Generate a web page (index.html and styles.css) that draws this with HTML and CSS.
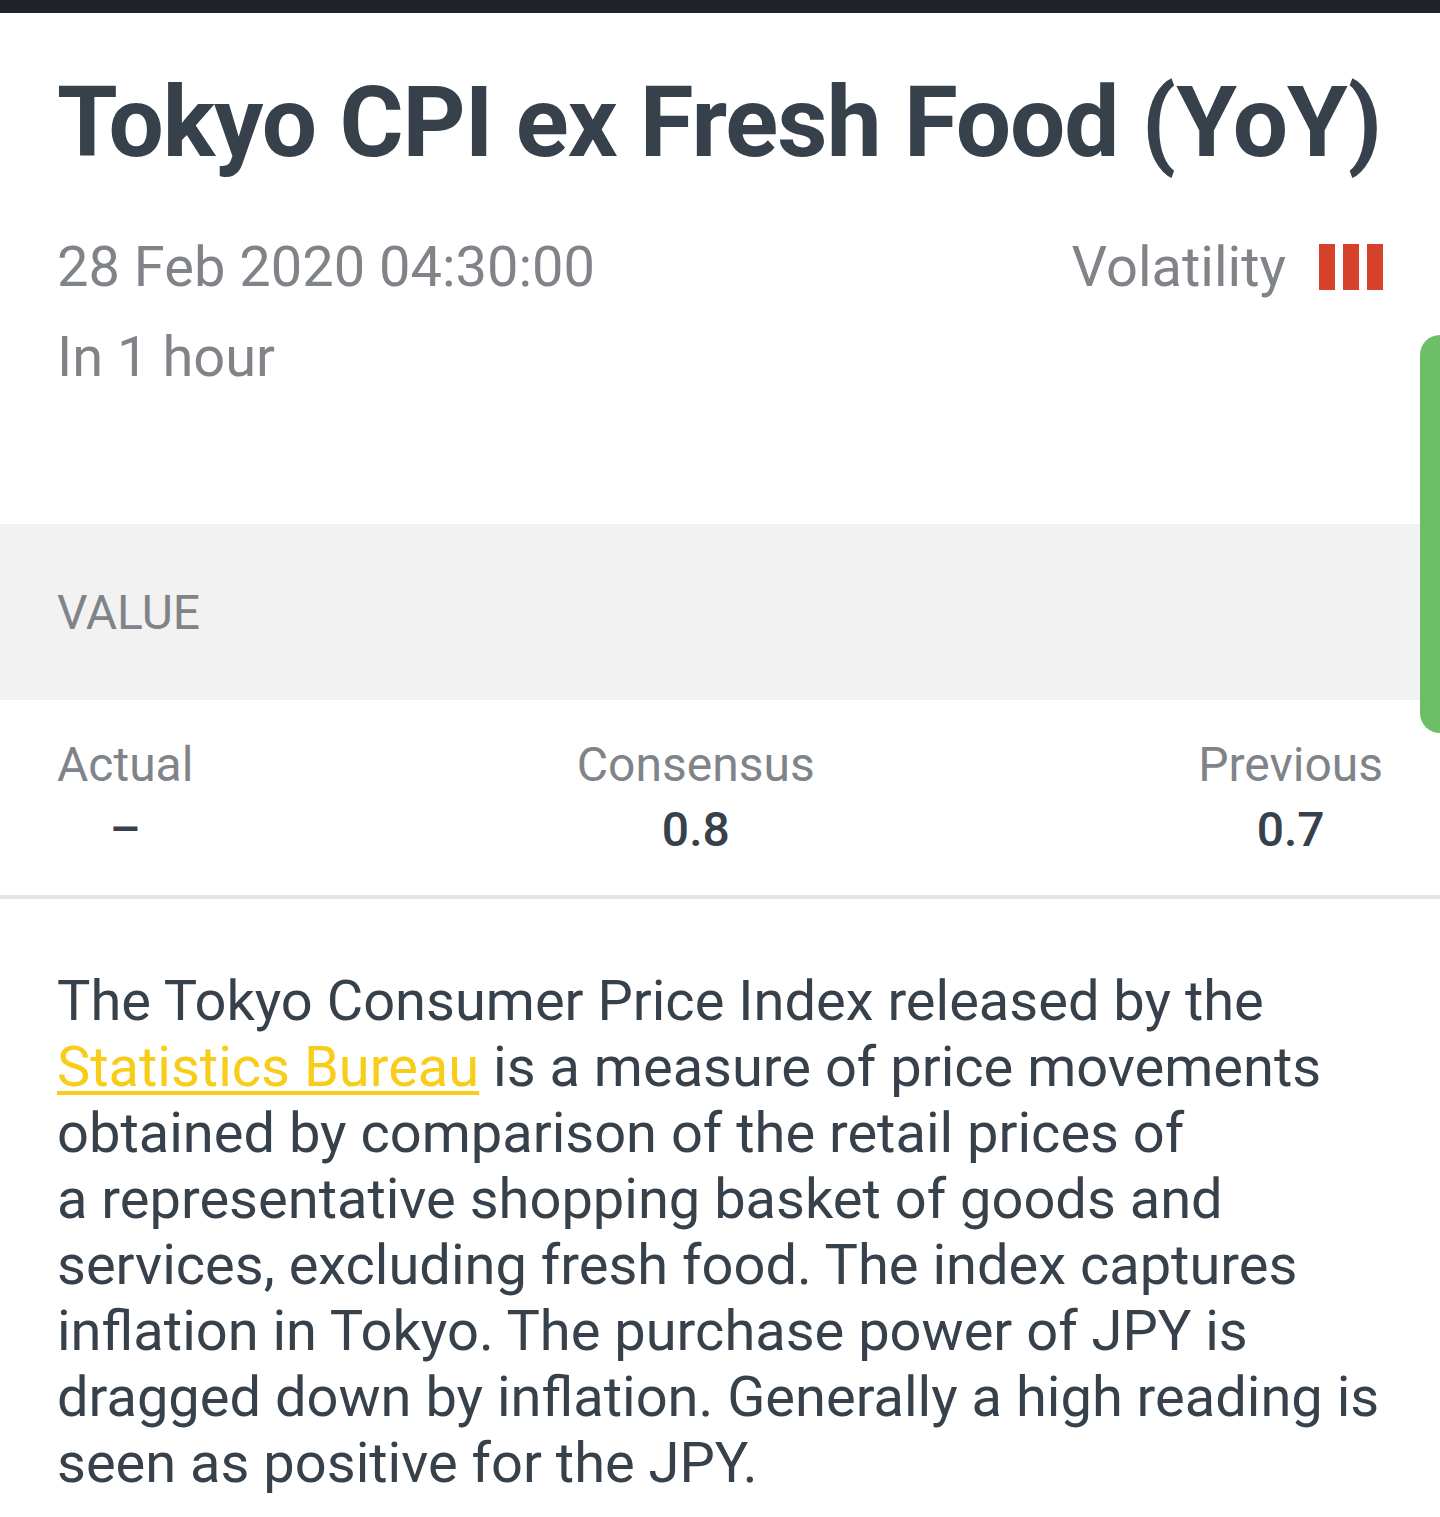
FILE: index.html
```html
<!DOCTYPE html>
<html lang="en">

<head>
    <meta charset="UTF-8">
    <meta name="viewport" content="width=device-width, initial-scale=1.0">
    <title>Tokyo CPI ex Fresh Food (YoY)</title>
    <link rel="stylesheet" href="styles.css">
</head>

<body>
    <div class="topbar"></div>
    <div class="event">
        <h1 class="title">Tokyo CPI ex Fresh Food (YoY)</h1>
        <div class="meta">
            <div class="when">
                <div class="date">28 Feb 2020 04:30:00</div>
                <div class="countdown">In 1 hour</div>
            </div>
            <div class="volatility">
                <span>Volatility</span>
                <span class="bars"><i></i><i></i><i></i></span>
            </div>
        </div>
    </div>

    <div class="section-head">VALUE</div>
    <div class="values">
        <div class="cell">
            <div class="label">Actual</div>
            <div class="num">&ndash;</div>
        </div>
        <div class="cell">
            <div class="label">Consensus</div>
            <div class="num">0.8</div>
        </div>
        <div class="cell">
            <div class="label">Previous</div>
            <div class="num">0.7</div>
        </div>
    </div>

    <p class="desc">The Tokyo Consumer Price Index released by the <a href="#">Statistics Bureau</a> is a measure of price movements obtained by comparison of the retail prices of a&nbsp;representative shopping basket of goods and services, excluding fresh food. The index captures inflation in Tokyo. The purchase power of JPY is dragged down by inflation. Generally a high reading is seen as positive for the JPY.</p>

    <div class="scroll-thumb"></div>
</body>

</html>
```

FILE: styles.css
```css
body {
    margin: 0;
    background-color: white;
    font-family: Roboto, "Noto Sans", sans-serif;
    color: #37414b;
    position: relative;
    overflow: hidden;
}
.topbar {
    height: 13px;
    background-color: #1e2229;
}

.event {
    padding: 0 57px;
    height: 511px;
}
.title {
    margin: 0;
    padding-top: 50px;
    font-size: 98px;
    font-weight: 700;
    line-height: 120px;
    letter-spacing: -1px;
    white-space: nowrap;
}
.meta {
    display: flex;
    justify-content: space-between;
    align-items: flex-start;
    margin-top: 39px;
    color: #808488;
    font-size: 56px;
}
.date,
.countdown {
    line-height: 90px;
}
.volatility {
    display: flex;
    align-items: center;
    gap: 33px;
    line-height: 90px;
}
.bars {
    display: flex;
    gap: 8px;
}
.bars i {
    display: block;
    width: 16px;
    height: 46px;
    background-color: #d6412a;
}

.section-head {
    background-color: #f2f2f2;
    height: 176px;
    padding: 0 57px;
    display: flex;
    align-items: center;
    font-size: 48px;
    color: #808488;
}

.values {
    display: flex;
    justify-content: space-between;
    padding: 33px 57px 32px;
    border-bottom: 4px solid #e6e6e6;
}
.cell {
    text-align: center;
}
.label {
    font-size: 48px;
    color: #808488;
    line-height: 64px;
}
.num {
    font-size: 48px;
    font-weight: 500;
    line-height: 66px;
}

.desc {
    margin: 0;
    padding: 69px 57px 40px;
    font-size: 56px;
    line-height: 66px;
}
.desc a {
    color: #f8cd1a;
    text-decoration-thickness: 4px;
    text-underline-offset: 5px;
}

.scroll-thumb {
    position: absolute;
    top: 335px;
    right: 0;
    width: 20px;
    height: 398px;
    background-color: #6dbf67;
    border-radius: 20px 0 0 20px;
}
```
